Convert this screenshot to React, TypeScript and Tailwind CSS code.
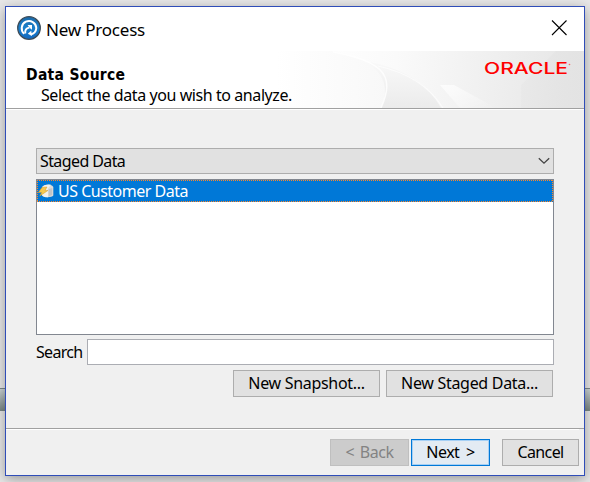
import type { ReactNode } from 'react';

function AppIcon() {
  return (
    <svg width="24" height="24" viewBox="0 0 24 24" className="shrink-0">
      <defs>
        <linearGradient id="disc" x1="0" y1="0" x2="0" y2="1">
          <stop offset="0" stopColor="#1b69a8" />
          <stop offset="0.5" stopColor="#1a80cc" />
          <stop offset="1" stopColor="#1268c0" />
        </linearGradient>
      </defs>
      <circle cx="12" cy="12" r="11.3" fill="url(#disc)" stroke="#3e4c58" strokeWidth="1.3" />
      <path d="M7.2 17.8A7.3 7.3 0 1 1 19.3 12C19 15.6 17 17.8 13.6 18.4" fill="none" stroke="#fff" strokeWidth="2" />
      <path d="M10.8 17.8 14.2 14.8 15 20Z" fill="#fff" />
      <path d="M8.4 17.6C7.6 14.4 9 12.2 12.4 11.6" fill="none" stroke="#fff" strokeWidth="1.9" />
      <path d="M10.6 8.9H15V13.8L13.6 12.8 11.8 10.8Z" fill="#fff" />
    </svg>
  );
}

function CloseIcon() {
  return (
    <svg width="16" height="16" viewBox="0 0 16 16" className="mt-[13px] mr-[17px]">
      <path d="M1 .5 15.5 15M15.5.5 1 15" stroke="#000" strokeWidth="1.1" />
    </svg>
  );
}

function StagedDataIcon() {
  return (
    <svg width="16" height="16" viewBox="0 0 16 16" className="shrink-0">
      <path d="M4 4.5C5 1.2 14 .6 15.3 4V12.5C14 14.6 6 15 4.5 12.5Z" fill="#dcdcda" />
      <path d="M4 4.5C5 1.5 10 1 13 1.8L10 5.4V14.3C7 14.4 5 13.8 4 12.5Z" fill="#f3f1ec" />
      <path d="M10.6 6.2 14.2 5V12L10.6 13.5Z" fill="#c2c4c7" />
      <path d="M4 4.4 9 4 7 7.4H10L1.8 13 3.6 9.6H.3Z" fill="#f6c94f" stroke="#d69a2b" strokeWidth=".5" />
    </svg>
  );
}

function Banner() {
  return (
    <svg width="578" height="57" viewBox="0 0 578 57" className="col-start-1 row-start-1">
      <defs>
        <linearGradient id="fade" gradientUnits="userSpaceOnUse" x1="310" x2="578" y1="0" y2="30">
          <stop offset="0" stopColor="#fff" />
          <stop offset="0.3" stopColor="#fafafa" />
          <stop offset="0.7" stopColor="#eeeeee" />
          <stop offset="1" stopColor="#e5e5e5" />
        </linearGradient>
        <linearGradient id="fold" x1="0" x2="0" y1="0" y2="1">
          <stop offset="0" stopColor="#f9f9f9" />
          <stop offset="1" stopColor="#ebebeb" />
        </linearGradient>
        <linearGradient id="wing" x1="0" x2="1">
          <stop offset="0" stopColor="#fff" />
          <stop offset="1" stopColor="#f8f8f8" />
        </linearGradient>
        <linearGradient id="sheen" x1="0" x2="1" y1="0" y2="1">
          <stop offset="0" stopColor="#fff" stopOpacity=".75" />
          <stop offset="1" stopColor="#fff" stopOpacity="0" />
        </linearGradient>
        <linearGradient id="edge" x1="0" x2="1">
          <stop offset="0" stopColor="#e5e5e5" stopOpacity=".4" />
          <stop offset="1" stopColor="#e3e3e3" />
        </linearGradient>
      </defs>
      <rect width="578" height="57" fill="#fff" />
      <path d="M310 0H578V57H300Z" fill="url(#fade)" />
      <path d="M270 0H327Q371 9 379 26Q384 36 375 57H270Z" fill="url(#wing)" />
      <path d="M359 10Q415 20 435 57H375Q388 28 359 10Z" fill="url(#fold)" />
      <path d="M327 1Q372 9 379 26Q384 37 375 57" fill="none" stroke="#fff" strokeWidth="1.5" opacity=".8" />
      <path d="M372 15Q417 25 437 57" fill="none" stroke="#fff" strokeWidth="1.2" opacity=".6" />
      <path d="M434 34 448 34 490 57H454Z" fill="url(#sheen)" />
      <path d="M515 57V34L550 0H578V57Z" fill="url(#edge)" />
    </svg>
  );
}

function Button({ className, children }: { className: string; children: ReactNode }) {
  return (
    <button type="button" className={`flex h-[27px] shrink-0 items-start justify-center border pt-[2px] ${className}`}>
      {children}
    </button>
  );
}

export default function App() {
  return (
    <div className="grid h-[482px] w-[590px] overflow-hidden bg-[#e8e8e8] font-['Noto_Sans',sans-serif] text-[16px] leading-[20px] tracking-[-0.5px] whitespace-nowrap text-black">
      <div className="col-start-1 row-start-1 mt-[388px] h-[23px] border-t border-[#7b888a] bg-linear-to-b from-[#ccd4d5] to-[#7a8785]" />
      <main className="z-10 col-start-1 row-start-1 mt-[6px] ml-[5px] flex h-[470px] w-[580px] flex-col border border-[#2f4db8] bg-[#f0f0f0] shadow-[0_3px_12px_0_rgba(0,0,0,0.35)]">
        <header className="flex h-[44px] shrink-0 items-start bg-white">
          <div className="flex flex-1 items-start gap-[5px] pt-[9px] pl-[11px]">
            <AppIcon />
            <h1 className="mt-[4px] text-[17px] tracking-[-0.2px]">New Process</h1>
          </div>
          <CloseIcon />
        </header>
        <section className="grid h-[59px] shrink-0 border-b border-white">
          <Banner />
          <div className="z-10 col-start-1 row-start-1 flex justify-between border-b border-[#a0a0a0]">
            <div className="pt-[15px] pl-[20px]">
              <h2 className="font-['DejaVu_Sans_Condensed','DejaVu_Sans',sans-serif] text-[15.5px] leading-[19px] font-bold tracking-[0.3px]">Data Source</h2>
              <p className="pl-[15px] tracking-[-0.42px]">Select the data you wish to analyze.</p>
            </div>
            <svg width="90" height="20" viewBox="0 0 90 20" className="mt-[8px] mr-[10px]">
              <text x="0" y="15.4" textLength="84" lengthAdjust="spacingAndGlyphs" fill="#f00" className="font-['Inter',sans-serif] text-[15.5px] font-medium tracking-normal">ORACLE</text>
              <circle cx="85.5" cy="5.5" r=".8" fill="#f66" />
            </svg>
          </div>
        </section>

        <section className="flex flex-1 flex-col pt-[38px] pr-[30px] pl-[30px]">
          <div className="flex h-[26px] shrink-0 items-start justify-between border border-[#adadad] bg-[#e1e1e1] pt-[2px] pr-[3px] pl-[3px]">
            <span className="tracking-[-0.6px]">Staged Data</span>
            <svg width="12" height="8" viewBox="0 0 12 8" className="mt-[6px]">
              <path d="M.8 1.2 6 6.2 11.2 1.2" fill="none" stroke="#444" strokeWidth="1.3" />
            </svg>
          </div>
          <div className="mt-[5px] h-[156px] shrink-0 border border-[#828790] bg-white">
            <div className="relative flex h-[22px] items-start bg-[#0078d7] px-px pt-px text-white">
              <svg width="516" height="22" viewBox="0 0 516 22" className="absolute inset-0">
                <path d="M0 .5H516M0 21.5H516M.5 0V22M515.5 0V22" fill="none" stroke="#ff8728" strokeDasharray="1 1" />
              </svg>
              <div className="pt-[2px]"><StagedDataIcon /></div>
              <span className="ml-[4px]">US Customer Data</span>
            </div>
          </div>
          <div className="mt-[4px] flex h-[26px] shrink-0">
            <label className="w-[51px] pt-[3px] tracking-[-0.7px]">Search</label>
            <input className="w-[467px] border border-[#abadb3] bg-white" />
          </div>
          <div className="mt-[5px] flex justify-end gap-[6px] pr-px">
            <Button className="w-[147px] border-[#adadad] bg-[#e1e1e1] tracking-[-0.3px]">New Snapshot...</Button>
            <Button className="w-[167px] border-[#adadad] bg-[#e1e1e1] tracking-[-0.3px]">New Staged Data...</Button>
          </div>
        </section>

        <footer className="flex h-[47px] shrink-0 justify-end border-t border-[#a0a0a0] pr-[5px]">
          <div className="flex w-full justify-end border-t border-white pt-[9px]">
            <Button className="mr-[2px] w-[79px] border-[#bfbfbf] bg-[#ccc] text-[#838383] [word-spacing:2px]">&lt; Back</Button>
            <Button className="mr-[12px] w-[79px] border-[#0078d7] bg-[#e3ebf3] shadow-[inset_0_0_0_1px_#a6d0f5] [word-spacing:3px]">Next &gt;</Button>
            <Button className="w-[77px] border-[#adadad] bg-[#e1e1e1] tracking-[-0.6px]">Cancel</Button>
          </div>
        </footer>
      </main>
    </div>
  );
}
